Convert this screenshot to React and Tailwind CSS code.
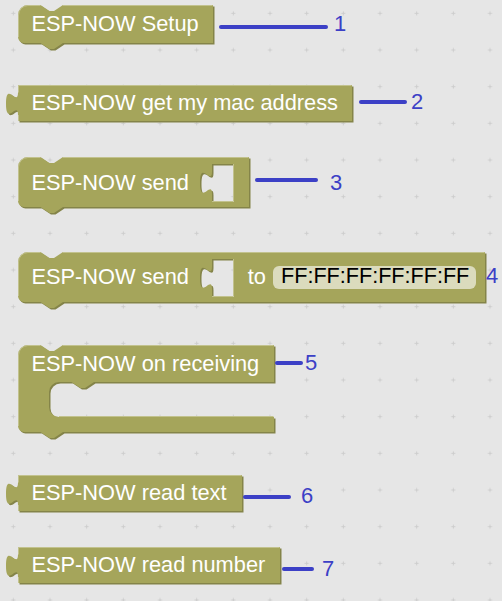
const TAB_UP = 'c 0,-15 -12,12 -12,-11.25 s 12,3.75 12,-11.25';

// statement block: notch on top, notch under the bottom
const stmt = (w, h) =>
  `M 0,10 A 10,10 0 0 1 10,0 H 22.5 l 9,6 4.5,0 9,-6 H ${w} V ${h} H 45 l -9,6 -4.5,0 -9,-6 H 6 A 6,6 0 0 1 0,${h - 6} Z`;
const stmtHl = (w, h) => `M 0.5,${h - 6} V 10 A 9.5,9.5 0 0 1 10,0.5 H 22.5 M 45,0.5 H ${w - 0.5}`;

// output block: puzzle tab on the left
const output = (w, h) => `M 0,0 H ${w} V ${h} H 0 V 30 ${TAB_UP} Z`;
const outputHl = (w, h) => `M 0,0.5 H ${w - 0.5} M 0.5,0.5 V 7.5 M 0.5,30 V ${h}`;

// empty value input (hole)
const slot = (x, y, x2, y2) => ` M ${x},${y} H ${x2} V ${y2} H ${x} V ${y + 30} ${TAB_UP} Z`;
const slotHl = (x, y, x2, y2) => ` M ${x},${y2 - 0.5} H ${x2 - 0.5} V ${y}`;

// C-shaped block with a statement input
const cblock = (w) =>
  `M 0,10 A 10,10 0 0 1 10,0 H 22.5 l 9,6 4.5,0 9,-6 H ${w} V 37 H 76 l -9,6 -4.5,0 -9,-6 H 41 A 10,10 0 0 0 31,47 V 62 A 10,10 0 0 0 41,72 H ${w} V 87 H 45 l -9,6 -4.5,0 -9,-6 H 6 A 6,6 0 0 1 0,81 Z`;
const cblockHl = (w) =>
  `M 0.5,81 V 10 A 9.5,9.5 0 0 1 10,0.5 H 22.5 M 45,0.5 H ${w - 0.5} M 41,71.5 H ${w - 0.5}`;

function Shape({ d, hl }) {
  return (
    <>
      <path d={d} fill="#848449" fillRule="evenodd" transform="translate(1.5,1.5)" />
      <path d={d} fill="#a5a55b" fillRule="evenodd" />
      <path d={hl} fill="none" stroke="#c2c28e" strokeWidth="1" />
    </>
  );
}

function Label({ x = 13.5, y, children }) {
  return (
    <text x={x} y={y} className="fill-white text-[21.8px]">
      {children}
    </text>
  );
}

function Line({ className }) {
  return <div className={`h-[4px] shrink-0 rounded-full bg-[#3c40c6] ${className}`} />;
}

function Num({ className, children }) {
  return <span className={`shrink-0 text-[22px] leading-[22px] text-[#3c40c6] ${className}`}>{children}</span>;
}

export default function App() {
  return (
    <div className="relative w-[502px] h-[601px] overflow-hidden bg-[#e6e6e6] font-['Liberation_Sans',Arial,sans-serif]">
      {/* workspace grid */}
      <svg className="absolute inset-0" width="502" height="601">
        <defs>
          <pattern id="grid" x="-5" y="-5" width="36.667" height="36.667" patternUnits="userSpaceOnUse">
            <path d="M 16.3,18.33 H 20.3 M 18.33,16.3 V 20.3" stroke="#cdcdcd" strokeWidth="1" />
          </pattern>
        </defs>
        <rect width="502" height="601" fill="url(#grid)" />
      </svg>

      <div className="relative flex flex-col pl-[18px] pt-[5px]">
        {/* 1 */}
        <div className="flex items-start">
          <svg className="shrink-0 overflow-visible" width="195" height="38">
            <Shape d={stmt(195, 38)} hl={stmtHl(195, 38)} />
            <Label y={25.7}>ESP-NOW Setup</Label>
          </svg>
          <Line className="ml-[6px] mt-[20px] w-[109px]" />
          <Num className="ml-[6px] mt-[8px]">1</Num>
        </div>

        {/* 2 */}
        <div className="mt-[42px] flex items-start">
          <svg className="shrink-0 overflow-visible" width="334" height="36">
            <Shape d={output(334, 36)} hl={outputHl(334, 36)} />
            <Label y={24.5}>ESP-NOW get my mac address</Label>
          </svg>
          <Line className="ml-[7px] mt-[15px] w-[48px]" />
          <Num className="ml-[4px] mt-[6px]">2</Num>
        </div>

        {/* 3 */}
        <div className="mt-[36px] flex items-start">
          <svg className="shrink-0 overflow-visible" width="231" height="50">
            <Shape d={stmt(231, 50) + slot(194, 7, 216, 45)} hl={stmtHl(231, 50) + slotHl(194, 7, 216, 45)} />
            <Label y={32.7}>ESP-NOW send</Label>
          </svg>
          <Line className="ml-[6px] mt-[21px] w-[63px]" />
          <Num className="ml-[12px] mt-[15px]">3</Num>
        </div>

        {/* 4 */}
        <div className="mt-[45px] flex items-start">
          <svg className="shrink-0 overflow-visible" width="467" height="50">
            <Shape d={stmt(467, 50) + slot(194, 7, 216, 45)} hl={stmtHl(467, 50) + slotHl(194, 7, 216, 45)} />
            <Label y={31.5}>ESP-NOW send</Label>
            <Label x={229.7} y={31.5}>to</Label>
            <rect x="255" y="14" width="203" height="23" rx="6" fill="#dbdbbd" />
            <text x="263" y="31.3" className="fill-black text-[21.6px]">FF:FF:FF:FF:FF:FF</text>
          </svg>
          <Num className="ml-[1px] mt-[13px]">4</Num>
        </div>

        {/* 5 */}
        <div className="mt-[43px] flex items-start">
          <svg className="shrink-0 overflow-visible" width="256" height="87">
            <Shape d={cblock(256)} hl={cblockHl(256)} />
            <Label y={25.7}>ESP-NOW on receiving</Label>
          </svg>
          <Line className="ml-[1px] mt-[16px] w-[28px]" />
          <Num className="ml-[2px] mt-[7px]">5</Num>
        </div>

        {/* 6 */}
        <div className="mt-[43px] flex items-start">
          <svg className="shrink-0 overflow-visible" width="224" height="36">
            <Shape d={output(224, 36)} hl={outputHl(224, 36)} />
            <Label y={25}>ESP-NOW read text</Label>
          </svg>
          <Line className="ml-[1px] mt-[20px] w-[48px]" />
          <Num className="ml-[10px] mt-[10px]">6</Num>
        </div>

        {/* 7 */}
        <div className="mt-[36px] flex items-start">
          <svg className="shrink-0 overflow-visible" width="262" height="36">
            <Shape d={output(262, 36)} hl={outputHl(262, 36)} />
            <Label y={25.3}>ESP-NOW read number</Label>
          </svg>
          <Line className="ml-[2px] mt-[20px] w-[32px]" />
          <Num className="ml-[8px] mt-[11px]">7</Num>
        </div>
      </div>
    </div>
  );
}
